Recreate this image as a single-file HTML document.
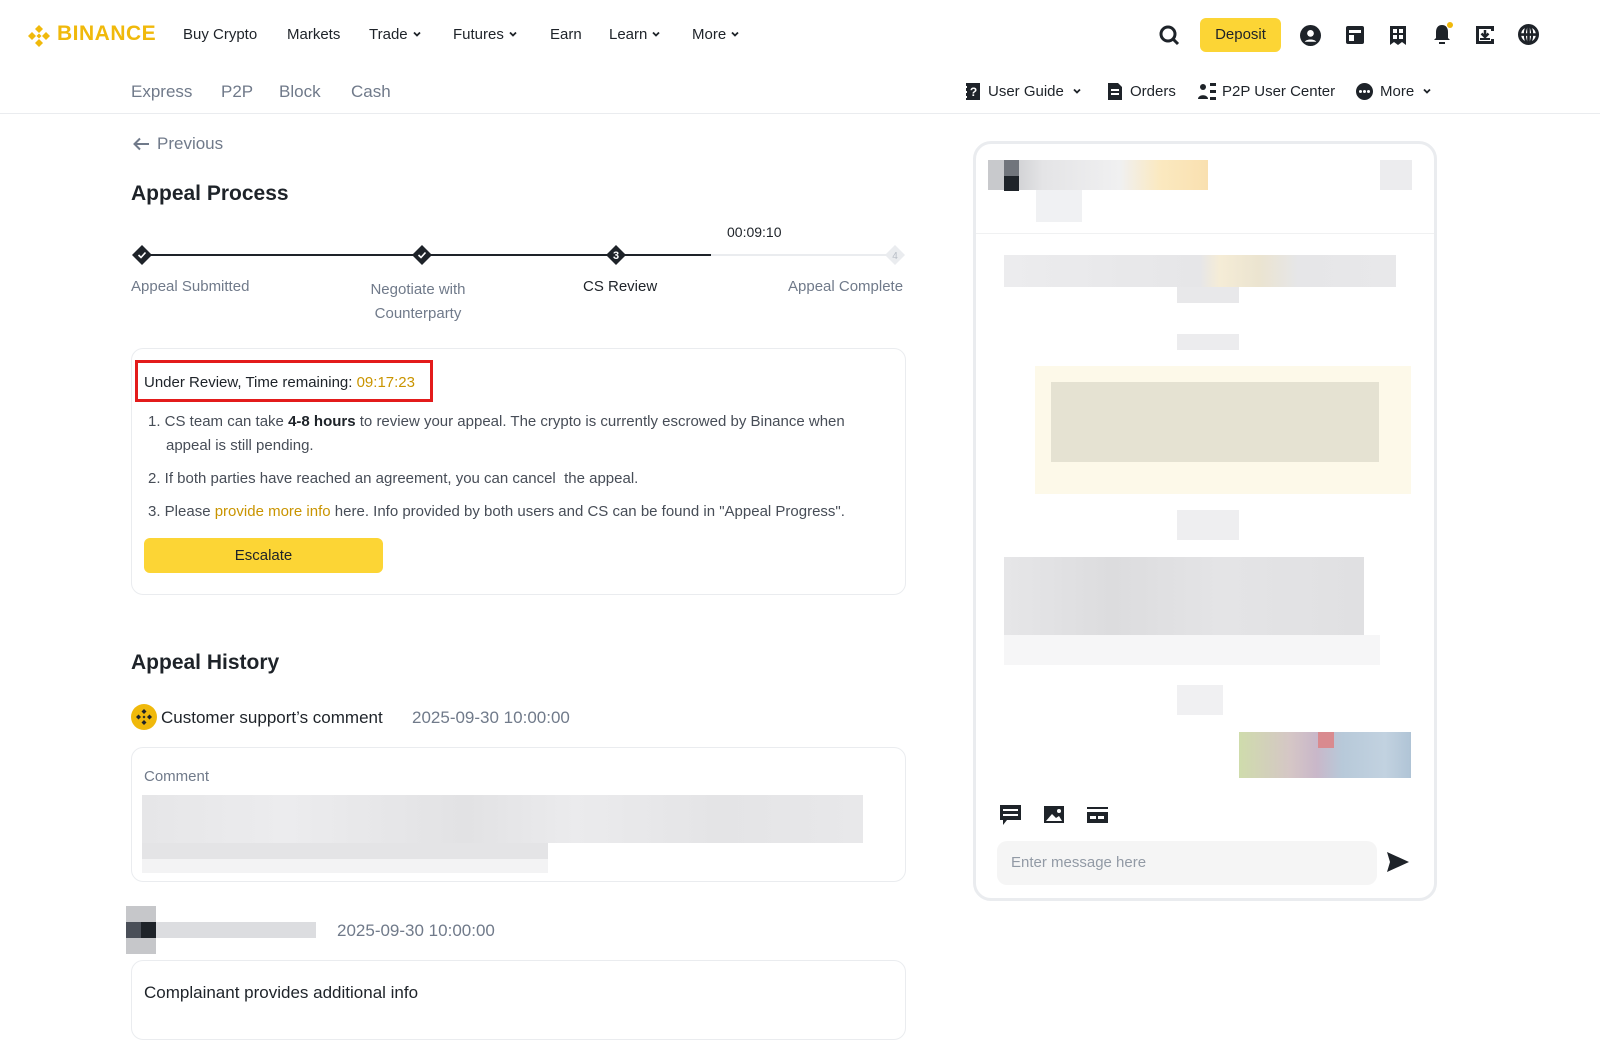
<!DOCTYPE html>
<html><head><meta charset="utf-8"><style>
*{box-sizing:border-box;margin:0;padding:0}
body{width:1600px;height:1022px;overflow:hidden;background:#fff;font-family:"Liberation Sans",sans-serif;color:#1e2329;position:relative}
.a{position:absolute}
.nav{font-size:15px;color:#1e2329}
.sub{font-size:17px;color:#707a8a}
.gray{color:#707a8a}
.cv{display:inline-block;vertical-align:middle;margin-left:4px;margin-top:-3px}
</style></head><body>
<svg width="0" height="0" style="position:absolute"><defs><symbol id="chev" viewBox="0 0 10 10"><path d="M2 3.5l3 3 3-3" stroke="#1e2329" stroke-width="1.8" fill="none"/></symbol></defs></svg>
<!-- logo -->
<svg class="a" style="left:26px;top:23px" width="26" height="26" viewBox="0 0 26 26"><g fill="#f0b90b"><path d="M13 2l4 4-4 4-4-4z"/><path d="M13 16l4 4-4 4-4-4z"/><path d="M6 9l4 4-4 4-4-4z"/><path d="M20 9l4 4-4 4-4-4z"/><path d="M13 10.5l2.5 2.5-2.5 2.5-2.5-2.5z"/></g></svg>
<div class="a" style="left:57px;top:22px;font-size:21px;font-weight:bold;color:#f0b90b;letter-spacing:0.5px">BINANCE</div>
<div class="a nav" style="left:183px;top:26px">Buy Crypto</div>
<div class="a nav" style="left:287px;top:26px">Markets</div>
<div class="a nav" style="left:369px;top:26px">Trade<svg class="cv" width="10" height="10"><use href="#chev"/></svg></div>
<div class="a nav" style="left:453px;top:26px">Futures<svg class="cv" width="10" height="10"><use href="#chev"/></svg></div>
<div class="a nav" style="left:550px;top:26px">Earn</div>
<div class="a nav" style="left:609px;top:26px">Learn<svg class="cv" width="10" height="10"><use href="#chev"/></svg></div>
<div class="a nav" style="left:692px;top:26px">More<svg class="cv" width="10" height="10"><use href="#chev"/></svg></div>
<!-- right header -->
<svg class="a" style="left:1158px;top:24px" width="22" height="22" viewBox="0 0 22 22"><circle cx="10" cy="10" r="7" stroke="#1e2329" stroke-width="3" fill="none"/><path d="M15 15l5 5" stroke="#1e2329" stroke-width="3"/></svg>
<div class="a" style="left:1200px;top:18px;width:81px;height:34px;background:#fcd535;border-radius:6px;font-size:15px;text-align:center;line-height:34px">Deposit</div>
<svg class="a" style="left:1300px;top:25px" width="21" height="21" viewBox="0 0 20 20"><circle cx="10" cy="10" r="10" fill="#1e2329"/><circle cx="10" cy="8" r="3.2" fill="#fff"/><path d="M4.5 16c1.5-3 9.5-3 11 0" fill="#fff"/></svg>
<svg class="a" style="left:1345px;top:25px" width="20" height="20" viewBox="0 0 20 20"><rect x="1" y="1" width="18" height="18" rx="2" fill="#1e2329"/><rect x="4" y="5" width="12" height="3" fill="#fff"/><rect x="4" y="10" width="5" height="6" fill="#fff"/></svg>
<svg class="a" style="left:1389px;top:25px" width="18" height="21" viewBox="0 0 18 21"><path d="M1 1h16v19l-4-3-4 3-4-3-4 3z" fill="#1e2329"/><rect x="4" y="4" width="4" height="4" fill="#fff"/><rect x="10" y="4" width="4" height="4" fill="#fff"/><rect x="4" y="10" width="4" height="4" fill="#fff"/><rect x="10" y="10" width="4" height="4" fill="#fff"/></svg>
<svg class="a" style="left:1432px;top:22px" width="22" height="24" viewBox="0 0 22 24"><path d="M10 3c-4 0-6 3-6 7v6l-2 2h16l-2-2v-6c0-4-2-7-6-7z" fill="#1e2329"/><rect x="7" y="20" width="6" height="2" fill="#1e2329"/><circle cx="18" cy="3" r="3" fill="#f0b90b"/></svg>
<svg class="a" style="left:1475px;top:25px" width="20" height="20" viewBox="0 0 20 20"><path d="M1 1h18v5h-3V4H4v12h12v-2h3v5H1z" fill="#1e2329"/><path d="M10 5v6M6.5 8.5L10 12l3.5-3.5" stroke="#1e2329" stroke-width="2.5" fill="none"/><rect x="5" y="13" width="10" height="2" fill="#1e2329"/></svg>
<svg class="a" style="left:1518px;top:24px" width="21" height="21" viewBox="0 0 20 20"><circle cx="10" cy="10" r="8.5" stroke="#1e2329" stroke-width="3" fill="none"/><path d="M10 1v18M1 10h18" stroke="#1e2329" stroke-width="2.5"/><ellipse cx="10" cy="10" rx="3.5" ry="8.5" stroke="#1e2329" stroke-width="2" fill="none"/></svg>
<!-- subnav -->
<div class="a sub" style="left:131px;top:82px">Express</div>
<div class="a sub" style="left:221px;top:82px">P2P</div>
<div class="a sub" style="left:279px;top:82px">Block</div>
<div class="a sub" style="left:351px;top:82px">Cash</div>
<svg class="a" style="left:965px;top:83px" width="16" height="17" viewBox="0 0 16 17"><rect x="1" y="0" width="14" height="17" fill="#1e2329"/><rect x="0" y="3" width="2" height="2" fill="#fff"/><rect x="0" y="8" width="2" height="2" fill="#fff"/><rect x="0" y="13" width="2" height="2" fill="#fff"/><text x="8.5" y="13" font-size="12" font-weight="bold" fill="#fff" text-anchor="middle" font-family="Liberation Sans">?</text></svg>
<div class="a nav" style="left:988px;top:83px">User Guide<svg class="cv" style="margin-left:8px" width="10" height="10"><use href="#chev"/></svg></div>
<svg class="a" style="left:1108px;top:83px" width="14" height="17" viewBox="0 0 14 17"><path d="M0 0h10l4 4v13H0z" fill="#1e2329"/><rect x="3" y="6" width="8" height="2" fill="#fff"/><rect x="3" y="10" width="8" height="2" fill="#fff"/></svg>
<div class="a nav" style="left:1130px;top:83px">Orders</div>
<svg class="a" style="left:1198px;top:83px" width="18" height="17" viewBox="0 0 18 17"><circle cx="5" cy="4" r="3" fill="#1e2329"/><path d="M0 16c0-5 10-5 10 0z" fill="#1e2329"/><rect x="12" y="0" width="6" height="3" fill="#1e2329"/><rect x="12" y="7" width="6" height="3" fill="#1e2329"/><rect x="12" y="14" width="6" height="3" fill="#1e2329"/></svg>
<div class="a nav" style="left:1222px;top:83px">P2P User Center</div>
<svg class="a" style="left:1356px;top:83px" width="17" height="17" viewBox="0 0 17 17"><circle cx="8.5" cy="8.5" r="8.5" fill="#1e2329"/><circle cx="4.5" cy="8.5" r="1.5" fill="#fff"/><circle cx="8.5" cy="8.5" r="1.5" fill="#fff"/><circle cx="12.5" cy="8.5" r="1.5" fill="#fff"/></svg>
<div class="a nav" style="left:1380px;top:83px">More<svg class="cv" style="margin-left:8px" width="10" height="10"><use href="#chev"/></svg></div>
<div class="a" style="left:0;top:113px;width:1600px;height:1px;background:#eaecef"></div>
<!-- left content -->
<svg class="a" style="left:133px;top:137px" width="17" height="14" viewBox="0 0 17 14"><path d="M16 7H2M7 1.5L1.5 7 7 12.5" stroke="#707a8a" stroke-width="2" fill="none"/></svg>
<div class="a" style="left:157px;top:134px;font-size:17px;color:#707a8a">Previous</div>
<div class="a" style="left:131px;top:182px;font-size:21px;font-weight:bold;color:#1e2329">Appeal Process</div>
<div class="a" style="left:141px;top:254px;width:570px;height:2px;background:#1e2329"></div>
<div class="a" style="left:711px;top:254px;width:183px;height:2px;background:#eaecef"></div>
<svg class="a" style="left:131px;top:244px" width="22" height="22" viewBox="0 0 22 22"><path d="M11 1l10 10-10 10L1 11z" fill="#1e2329"/><path d="M7.5 11l2.5 2.5 4.5-5" stroke="#fff" stroke-width="1.6" fill="none"/></svg>
<svg class="a" style="left:411px;top:244px" width="22" height="22" viewBox="0 0 22 22"><path d="M11 1l10 10-10 10L1 11z" fill="#1e2329"/><path d="M7.5 11l2.5 2.5 4.5-5" stroke="#fff" stroke-width="1.6" fill="none"/></svg>
<svg class="a" style="left:605px;top:244px" width="22" height="22" viewBox="0 0 22 22"><path d="M11 1l10 10-10 10L1 11z" fill="#1e2329"/><text x="11" y="15" font-size="11" font-weight="bold" fill="#fff" text-anchor="middle" font-family="Liberation Sans">3</text></svg>
<svg class="a" style="left:884px;top:244px" width="22" height="22" viewBox="0 0 22 22"><path d="M11 1l10 10-10 10L1 11z" fill="#eaecef"/><text x="11" y="15" font-size="10" fill="#b7bdc6" text-anchor="middle" font-family="Liberation Sans">4</text></svg>
<div class="a" style="left:727px;top:224px;font-size:14px">00:09:10</div>
<div class="a gray" style="left:131px;top:278px;font-size:15px">Appeal Submitted</div>
<div class="a gray" style="left:352px;top:278px;width:132px;text-align:center;font-size:15px;line-height:24px">Negotiate with Counterparty</div>
<div class="a" style="left:583px;top:278px;font-size:15px">CS Review</div>
<div class="a gray" style="left:788px;top:278px;font-size:15px">Appeal Complete</div>
<!-- review box -->
<div class="a" style="left:131px;top:348px;width:775px;height:247px;border:1px solid #eaecef;border-radius:12px"></div>
<div class="a" style="left:135px;top:360px;width:298px;height:42px;border:3px solid #e31b1b"></div>
<div class="a" style="left:144px;top:374px;font-size:15px">Under Review, Time remaining: <span style="color:#c99400">09:17:23</span></div>
<div class="a" style="left:148px;top:410px;width:740px;font-size:15px;line-height:24px;color:#474d57">
<div style="padding-left:18px;text-indent:-18px">1. CS team can take <b style="color:#1e2329">4-8 hours</b> to review your appeal. The crypto is currently escrowed by Binance when appeal is still pending.</div>
<div style="margin-top:9px">2. If both parties have reached an agreement, you can cancel&nbsp; the appeal.</div>
<div style="margin-top:9px">3. Please <span style="color:#c99400">provide more info</span> here. Info provided by both users and CS can be found in "Appeal Progress".</div>
</div>
<div class="a" style="left:144px;top:538px;width:239px;height:35px;background:#fcd535;border-radius:6px;text-align:center;line-height:35px;font-size:15px">Escalate</div>
<!-- history -->
<div class="a" style="left:131px;top:651px;font-size:21px;font-weight:bold">Appeal History</div>
<svg class="a" style="left:131px;top:704px" width="26" height="26" viewBox="0 0 26 26"><circle cx="13" cy="13" r="13" fill="#f0b90b"/><g fill="#1e2329"><path d="M13 5l2.5 2.5L13 10l-2.5-2.5z"/><path d="M13 16l2.5 2.5L13 21l-2.5-2.5z"/><path d="M7.5 10.5L10 13l-2.5 2.5L5 13z"/><path d="M18.5 10.5L21 13l-2.5 2.5L16 13z"/><path d="M13 11.5l1.5 1.5-1.5 1.5-1.5-1.5z"/></g></svg>
<div class="a" style="left:161px;top:708px;font-size:17px">Customer support’s comment</div>
<div class="a gray" style="left:412px;top:708px;font-size:17px">2025-09-30 10:00:00</div>
<div class="a" style="left:131px;top:747px;width:775px;height:135px;border:1px solid #eaecef;border-radius:12px"></div>
<div class="a gray" style="left:144px;top:768px;font-size:15px">Comment</div>
<div class="a" style="left:142px;top:795px;width:721px;height:48px;background:linear-gradient(90deg,#e6e6e8,#ececee 20%,#e2e2e4 45%,#ebebed 60%,#e4e4e6 80%,#e8e8ea)"></div>
<div class="a" style="left:142px;top:843px;width:406px;height:16px;background:#e4e4e6"></div>
<div class="a" style="left:142px;top:859px;width:406px;height:14px;background:#f3f3f4"></div>
<div class="a" style="left:126px;top:906px;width:30px;height:48px;background:#c6c7ca"></div>
<div class="a" style="left:126px;top:922px;width:30px;height:16px;background:#4a4f58"></div>
<div class="a" style="left:141px;top:922px;width:15px;height:16px;background:#1e2329"></div>
<div class="a" style="left:156px;top:922px;width:160px;height:16px;background:#dcdde0"></div>
<div class="a gray" style="left:337px;top:921px;font-size:17px">2025-09-30 10:00:00</div>
<div class="a" style="left:131px;top:960px;width:775px;height:80px;border:1px solid #eaecef;border-radius:12px"></div>
<div class="a" style="left:144px;top:983px;font-size:17px">Complainant provides additional info</div>
<!-- chat -->
<div class="a" style="left:973px;top:141px;width:464px;height:760px;border:3px solid #eaecef;border-radius:18px"></div>
<div class="a" style="left:976px;top:233px;width:458px;height:1px;background:#f0f1f2"></div>
<div class="a" style="left:988px;top:160px;width:220px;height:30px;background:linear-gradient(90deg,#c8c9cc 0,#c8c9cc 7%,#e4e4e6 25%,#f0f0f1 60%,#fbe9c0 78%,#f9e0b0 100%)"></div>
<div class="a" style="left:1004px;top:176px;width:15px;height:15px;background:#1e2329"></div>
<div class="a" style="left:1004px;top:160px;width:15px;height:16px;background:#71757c"></div>
<div class="a" style="left:1036px;top:190px;width:46px;height:32px;background:#f0f1f3"></div>
<div class="a" style="left:1380px;top:160px;width:32px;height:30px;background:#ececee"></div>
<div class="a" style="left:1004px;top:255px;width:392px;height:32px;background:linear-gradient(90deg,#ececee,#e6e6e8 50%,#f5ecd6 55%,#ebe4d0 65%,#e6e6e8 75%,#e8e8ea)"></div>
<div class="a" style="left:1177px;top:287px;width:62px;height:16px;background:#e8e8ea"></div>
<div class="a" style="left:1177px;top:334px;width:62px;height:16px;background:#ececee"></div>
<div class="a" style="left:1035px;top:366px;width:376px;height:128px;background:#fdf9e9"></div>
<div class="a" style="left:1051px;top:382px;width:328px;height:80px;background:#e5e2d2"></div>
<div class="a" style="left:1177px;top:510px;width:62px;height:30px;background:#eeeef0"></div>
<div class="a" style="left:1004px;top:557px;width:360px;height:78px;background:linear-gradient(90deg,#e6e6e8,#dcdcde 30%,#e4e4e6 60%,#e0e0e2)"></div>
<div class="a" style="left:1004px;top:635px;width:376px;height:30px;background:#f6f6f7"></div>
<div class="a" style="left:1177px;top:685px;width:46px;height:30px;background:#f0f0f2"></div>
<div class="a" style="left:1239px;top:732px;width:172px;height:46px;background:linear-gradient(90deg,#cfdcac,#d5c6c6 30%,#c9b7c9 45%,#b7c9d9 60%,#c2d2e0 85%,#b0c4d6)"></div>
<div class="a" style="left:1318px;top:732px;width:16px;height:16px;background:#d98a8f"></div>
<svg class="a" style="left:1000px;top:805px" width="21" height="21" viewBox="0 0 21 21"><path d="M0 0h21v15H7l-4 5v-5H0z" fill="#1e2329"/><rect x="3" y="4" width="15" height="2" fill="#fff"/><rect x="3" y="9" width="15" height="2" fill="#fff"/></svg>
<svg class="a" style="left:1044px;top:806px" width="20" height="17" viewBox="0 0 20 17"><rect width="20" height="17" fill="#1e2329"/><path d="M2 15l6-7 4 4 3-2 3 5z" fill="#fff"/><circle cx="15" cy="5" r="2" fill="#fff"/></svg>
<svg class="a" style="left:1087px;top:807px" width="21" height="16" viewBox="0 0 21 16"><rect y="0" width="21" height="2" fill="#1e2329"/><rect y="5" width="21" height="11" fill="#1e2329"/><rect x="3" y="9" width="6" height="3" fill="#fff"/><rect x="11" y="9" width="6" height="3" fill="#fff"/></svg>
<div class="a" style="left:997px;top:841px;width:380px;height:44px;background:#f5f5f5;border-radius:10px;font-size:15px;color:#929aa5;line-height:44px;padding-left:14px">Enter message here</div>
<svg class="a" style="left:1387px;top:852px" width="22" height="20" viewBox="0 0 22 20"><path d="M0 0l22 10L0 20l3-10z" fill="#1e2329"/></svg>
</body></html>
